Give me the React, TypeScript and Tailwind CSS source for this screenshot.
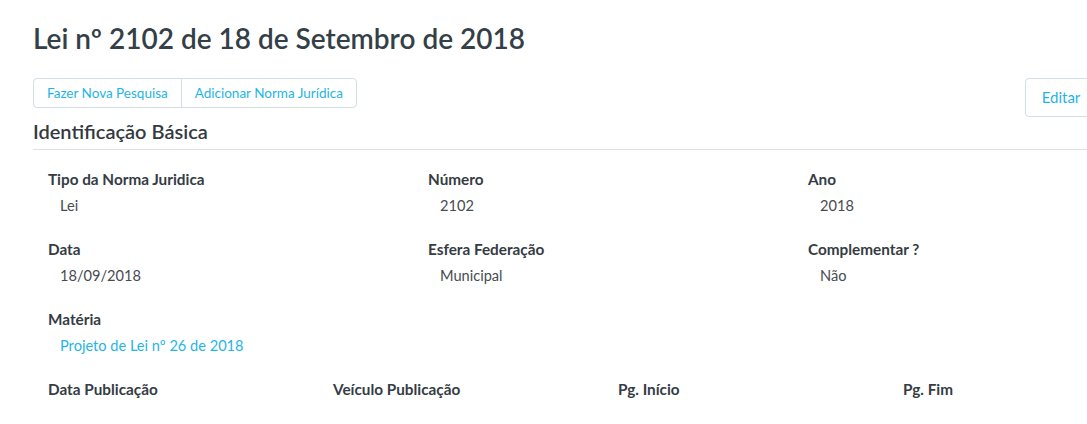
const font = { fontFamily: 'Lato, "Noto Sans", sans-serif' }

type Field = { label: string; value?: string; link?: boolean }

const rows: Field[][] = [
  [
    { label: 'Tipo da Norma Juridica', value: 'Lei' },
    { label: 'Número', value: '2102' },
    { label: 'Ano', value: '2018' },
  ],
  [
    { label: 'Data', value: '18/09/2018' },
    { label: 'Esfera Federação', value: 'Municipal' },
    { label: 'Complementar ?', value: 'Não' },
  ],
  [{ label: 'Matéria', value: 'Projeto de Lei nº 26 de 2018', link: true }],
]

const pubRow: Field[] = [
  { label: 'Data Publicação' },
  { label: 'Veículo Publicação' },
  { label: 'Pg. Início' },
  { label: 'Pg. Fim' },
]

function FieldBlock({ field }: { field: Field }) {
  return (
    <div className="px-[15px]">
      <p className="text-[15.3px] leading-5 font-bold text-[#353c44]">{field.label}</p>
      {field.value && (
        <p
          className={`mt-[5px] pl-3 text-[14.6px] leading-6 ${
            field.link ? 'text-[#1fb5e6]' : 'text-[#464c52]'
          }`}
        >
          {field.value}
        </p>
      )}
    </div>
  )
}

export default function App() {
  return (
    <div className="min-h-[424px] w-full overflow-hidden bg-white" style={font}>
      <div className="pl-[33px]">
        <h1 className="pt-[21px] text-[28px] leading-[34px] font-semibold text-[#343f48]">
          Lei nº 2102 de 18 de Setembro de 2018
        </h1>

        <div className="mt-[23px] flex w-[1064px] items-start justify-between">
          <div className="flex h-[30px] rounded border border-[#d3dee4] text-[13.5px] text-[#1fb5e6]">
            <button className="px-[13px]">Fazer Nova Pesquisa</button>
            <button className="border-l border-[#d3dee4] px-[13px]">Adicionar Norma Jurídica</button>
          </div>
          <button className="h-[39px] w-[72px] rounded border border-[#d3dee4] text-[15px] text-[#1fb5e6]">
            Editar
          </button>
        </div>

        <h2 className="mt-[2px] text-[20px] leading-6 font-semibold text-[#343a40]">Identificação Básica</h2>
        <div className="mt-[6px] border-b border-[#dee2e6]" />

        <div className="mt-[19px] w-[1140px]">
          {rows.map((row, i) => (
            <div key={i} className="mb-[21px] grid grid-cols-3">
              {row.map((f) => (
                <FieldBlock key={f.label} field={f} />
              ))}
            </div>
          ))}
          <div className="grid grid-cols-4">
            {pubRow.map((f) => (
              <FieldBlock key={f.label} field={f} />
            ))}
          </div>
        </div>
      </div>
    </div>
  )
}
